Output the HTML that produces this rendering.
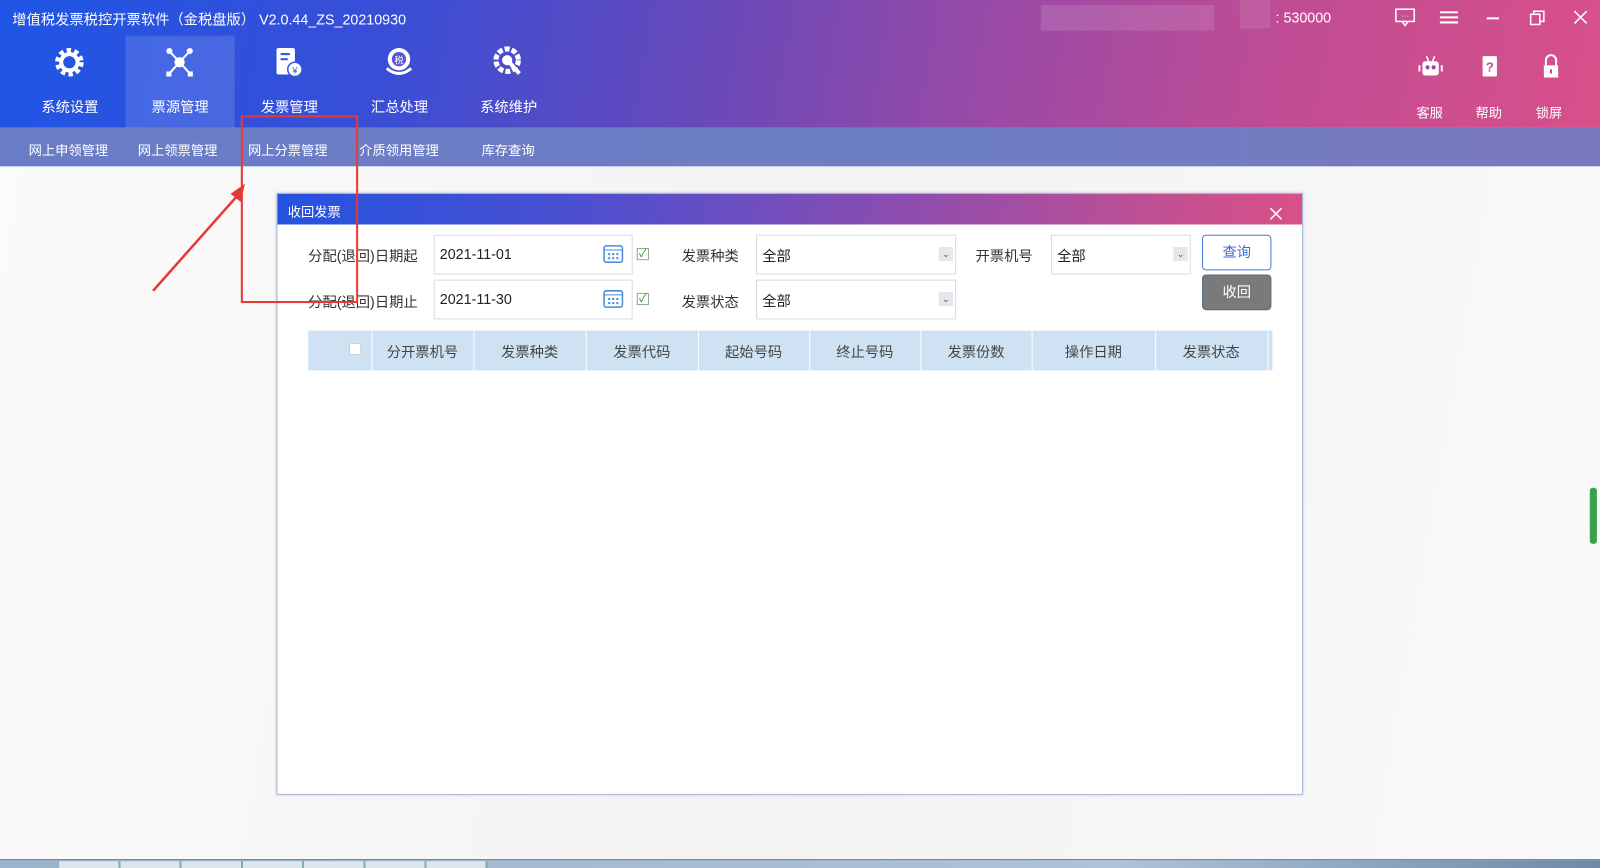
<!DOCTYPE html>
<html><head><meta charset="utf-8"><style>
*{margin:0;padding:0;box-sizing:border-box}
html,body{width:1600px;height:868px;overflow:hidden;background:#f8f8f8}
#w{position:absolute;left:0;top:0;width:1568px;height:851px;transform:scale(1.0204);transform-origin:0 0;font-family:"Liberation Sans","Noto Sans CJK SC",sans-serif;background:linear-gradient(100deg,#fbfbfb,#f3f3f3 50%,#f9f9f9)}
.a{position:absolute}
#hd{left:0;top:0;width:1568px;height:125px;background:linear-gradient(100deg,#1f55e6 0%,#3a4ed6 25%,#6a49b8 45%,#9a4aa6 62%,#c04c94 80%,#d8508a 100%)}
.t{color:#fff;font-size:14px;white-space:nowrap}
.nav{position:absolute;top:35px;width:107px;height:90px;text-align:center;color:#fff;font-size:14px}
.nav .lb{position:absolute;top:60px;left:0;width:100%}
.nav svg{position:absolute;left:38px;top:10px}
#sub{left:0;top:125px;width:1568px;height:38px;background:linear-gradient(90deg,#6a7cc6,#6e7ec4 60%,#7a78be)}
.si{position:absolute;top:12px;color:#fff;font-size:13px}
#dlg{left:271px;top:189px;width:1006px;height:590px;background:#fff;border:1px solid #a9b8d8;box-shadow:0 0 3px #bbb}
#dt{left:0;top:0;width:1004px;height:30px;background:linear-gradient(100deg,#2353e0,#4d4fd0 30%,#8a4db0 60%,#c9508f 90%,#d85088)}
.lab{position:absolute;font-size:14px;color:#333}
.inp{position:absolute;height:39px;border:1px solid #d6dbe3;background:#fff;font-size:14px;color:#222;padding:10px 0 0 5px}
.dd{position:absolute;right:2px;top:11px;width:14px;height:14px;background:#e4e7ec;color:#555;font-size:9px;text-align:center;line-height:14px}
.cb{position:absolute;width:12px;height:12px;border:1px solid #8a9;background:#fff;color:#2a8a2a;font-size:11px;line-height:10px;text-align:center}
#th{left:30px;top:134px;width:945px;height:39px;background:#cfe2f3}
.th{position:absolute;top:11px;font-size:14px;color:#444;text-align:center}
.sep{position:absolute;top:0;width:1px;height:39px;background:#fff}
</style></head><body><div id="w">
<div id="hd" class="a">
 <div class="a" style="left:1020px;top:5px;width:170px;height:25px;background:rgba(255,255,255,.12)"></div>
 <div class="a" style="left:1215px;top:0;width:30px;height:28px;background:rgba(255,255,255,.1)"></div>
 <div class="a t" style="left:12px;top:9px">增值税发票税控开票软件（金税盘版） V2.0.44_ZS_20210930</div>
 <div class="a t" style="left:1250px;top:9px">: 530000</div>
 <div class="a" style="left:123px;top:35px;width:107px;height:90px;background:rgba(255,255,255,.13)"></div>
 <div class="nav" style="left:15px"><svg width="30" height="32" viewBox="0 0 30 32"><circle cx="15" cy="16" r="11" fill="none" stroke="#fff" stroke-width="6" stroke-dasharray="4 3"/><circle cx="15" cy="16" r="8" fill="none" stroke="#fff" stroke-width="4"/></svg><div class="lb">系统设置</div></div>
 <div class="nav" style="left:123px"><svg width="30" height="32" viewBox="0 0 30 32"><g stroke="#fff" stroke-width="2"><line x1="15" y1="16" x2="5" y2="5"/><line x1="15" y1="16" x2="25" y2="5"/><line x1="15" y1="16" x2="5" y2="27"/><line x1="15" y1="16" x2="25" y2="27"/></g><circle cx="15" cy="16" r="5" fill="#fff"/><circle cx="5" cy="5" r="3" fill="#fff"/><circle cx="25" cy="5" r="3" fill="#fff"/><rect x="2" y="25" width="5" height="5" fill="#fff"/><rect x="23" y="25" width="5" height="5" fill="#fff"/></svg><div class="lb">票源管理</div></div>
 <div class="nav" style="left:230px"><svg width="30" height="32" viewBox="0 0 30 32"><rect x="3" y="2" width="18" height="26" rx="2" fill="#fff"/><g stroke="#3a5ad8" stroke-width="2"><line x1="7" y1="8" x2="16" y2="8"/><line x1="7" y1="13" x2="14" y2="13"/></g><circle cx="21" cy="23" r="7" fill="#fff" stroke="#3a5ad8" stroke-width="1.5"/><text x="21" y="27" font-size="9" text-anchor="middle" fill="#3a5ad8">¥</text></svg><div class="lb">发票管理</div></div>
 <div class="nav" style="left:338px"><svg width="30" height="32" viewBox="0 0 30 32"><circle cx="15" cy="13" r="11" fill="#fff"/><circle cx="15" cy="13" r="7" fill="#5a55d0"/><text x="15" y="17" font-size="9" text-anchor="middle" fill="#fff">税</text><path d="M3 22 Q15 32 27 22" stroke="#fff" stroke-width="3" fill="none"/></svg><div class="lb">汇总处理</div></div>
 <div class="nav" style="left:445px"><svg width="30" height="32" viewBox="0 0 30 32"><circle cx="14" cy="14" r="11" fill="none" stroke="#fff" stroke-width="5" stroke-dasharray="5 2"/><circle cx="14" cy="14" r="5" fill="#fff"/><line x1="17" y1="17" x2="26" y2="27" stroke="#fff" stroke-width="4"/></svg><div class="lb">系统维护</div></div>
 <svg class="a" style="left:1367px;top:8px" width="20" height="18"><rect x="1" y="1" width="18" height="12" fill="none" stroke="#fff" stroke-width="1.5"/><path d="M7 13 L10 17 L13 13" fill="none" stroke="#fff" stroke-width="1.5"/><text x="10" y="10" font-size="8" fill="#fff" text-anchor="middle">···</text></svg>
 <svg class="a" style="left:1411px;top:11px" width="18" height="12"><g stroke="#fff" stroke-width="2"><line x1="0" y1="1" x2="18" y2="1"/><line x1="0" y1="6" x2="18" y2="6"/><line x1="0" y1="11" x2="18" y2="11"/></g></svg>
 <div class="a" style="left:1457px;top:17px;width:12px;height:2px;background:#fff"></div>
 <svg class="a" style="left:1499px;top:10px" width="15" height="15"><rect x="1" y="4" width="9" height="10" fill="none" stroke="#fff" stroke-width="1.5"/><path d="M4 4 V1 H14 V11 H10" fill="none" stroke="#fff" stroke-width="1.5"/></svg>
 <svg class="a" style="left:1542px;top:10px" width="14" height="14"><path d="M1 1L13 13M13 1L1 13" stroke="#fff" stroke-width="1.5"/></svg>
 <svg class="a" style="left:1390px;top:53px" width="24" height="24"><line x1="8" y1="2" x2="10" y2="7" stroke="#fff" stroke-width="1.5"/><line x1="16" y1="2" x2="14" y2="7" stroke="#fff" stroke-width="1.5"/><rect x="4" y="7" width="16" height="14" rx="3" fill="#fff"/><rect x="0" y="11" width="2" height="6" fill="#fff"/><rect x="22" y="11" width="2" height="6" fill="#fff"/><circle cx="9" cy="13" r="2" fill="#9a4aa6"/><circle cx="15" cy="13" r="2" fill="#9a4aa6"/></svg>
 <svg class="a" style="left:1451px;top:53px" width="18" height="24"><rect x="2" y="2" width="14" height="20" rx="1" fill="#fff"/><text x="9" y="17" font-size="13" fill="#c04c94" text-anchor="middle" font-weight="bold">?</text></svg>
 <svg class="a" style="left:1511px;top:52px" width="18" height="26"><path d="M4 12 V7 a5 5 0 0 1 10 0 V12" fill="none" stroke="#fff" stroke-width="2"/><rect x="2" y="12" width="14" height="12" fill="#fff"/><rect x="8" y="16" width="2" height="4" fill="#c04c94"/></svg>
 <div class="a t" style="left:1388px;top:100px;font-size:13px">客服</div>
 <div class="a t" style="left:1446px;top:100px;font-size:13px">帮助</div>
 <div class="a t" style="left:1505px;top:100px;font-size:13px">锁屏</div>
</div>
<div id="sub" class="a">
 <div class="si" style="left:28px">网上申领管理</div>
 <div class="si" style="left:135px">网上领票管理</div>
 <div class="si" style="left:243px">网上分票管理</div>
 <div class="si" style="left:352px">介质领用管理</div>
 <div class="si" style="left:472px">库存查询</div>
</div>
<div class="a" style="left:1558px;top:478px;width:7px;height:55px;background:#3aa04a;border-radius:3px"></div>
<div id="dlg" class="a">
 <div id="dt" class="a"><div class="a t" style="left:10px;top:7px;font-size:13px">收回发票</div>
 <svg class="a" style="left:972px;top:13px" width="13" height="13"><path d="M1 1L12 12M12 1L1 12" stroke="#fff" stroke-width="1.5"/></svg></div>
 <div class="lab" style="left:30px;top:51px">分配(退回)日期起</div>
 <div class="inp" style="left:153px;top:40px;width:195px">2021-11-01</div>
 <div class="lab" style="left:30px;top:96px">分配(退回)日期止</div>
 <div class="inp" style="left:153px;top:84px;width:195px">2021-11-30</div>
 <svg class="a" style="left:319px;top:48px" width="20" height="20"><rect x="1" y="3" width="18" height="16" rx="2" fill="none" stroke="#4a8ad8" stroke-width="1.5"/><line x1="1" y1="7" x2="19" y2="7" stroke="#4a8ad8"/><g fill="#4a8ad8"><rect x="5" y="10" width="2" height="2"/><rect x="9" y="10" width="2" height="2"/><rect x="13" y="10" width="2" height="2"/><rect x="5" y="14" width="2" height="2"/><rect x="9" y="14" width="2" height="2"/><rect x="13" y="14" width="2" height="2"/></g></svg>
 <svg class="a" style="left:319px;top:92px" width="20" height="20"><rect x="1" y="3" width="18" height="16" rx="2" fill="none" stroke="#4a8ad8" stroke-width="1.5"/><line x1="1" y1="7" x2="19" y2="7" stroke="#4a8ad8"/><g fill="#4a8ad8"><rect x="5" y="10" width="2" height="2"/><rect x="9" y="10" width="2" height="2"/><rect x="13" y="10" width="2" height="2"/><rect x="5" y="14" width="2" height="2"/><rect x="9" y="14" width="2" height="2"/><rect x="13" y="14" width="2" height="2"/></g></svg>
 <div class="cb" style="left:352px;top:53px">✓</div>
 <div class="cb" style="left:352px;top:97px">✓</div>
 <div class="lab" style="left:396px;top:51px">发票种类</div>
 <div class="inp" style="left:469px;top:40px;width:196px">全部<div class="dd">⌄</div></div>
 <div class="lab" style="left:396px;top:96px">发票状态</div>
 <div class="inp" style="left:469px;top:84px;width:196px">全部<div class="dd">⌄</div></div>
 <div class="lab" style="left:684px;top:51px">开票机号</div>
 <div class="inp" style="left:758px;top:40px;width:137px">全部<div class="dd">⌄</div></div>
 <div class="a" style="left:906px;top:40px;width:68px;height:35px;border:1px solid #4a7ad8;border-radius:4px;color:#3a6ad8;font-size:14px;text-align:center;line-height:33px">查询</div>
 <div class="a" style="left:906px;top:79px;width:68px;height:35px;border:1px solid #5a6a80;border-radius:4px;background:#7a7a7a;color:#fff;font-size:14px;text-align:center;line-height:33px">收回</div>
 <div id="th" class="a">
  <div class="a" style="left:40px;top:12px;width:12px;height:12px;background:#fff;border:1px solid #ccd"></div>
  <div class="sep" style="left:62px"></div><div class="sep" style="left:162px"></div><div class="sep" style="left:272px"></div><div class="sep" style="left:382px"></div><div class="sep" style="left:491px"></div><div class="sep" style="left:600px"></div><div class="sep" style="left:709px"></div><div class="sep" style="left:830px"></div><div class="sep" style="left:940px"></div>
  <div class="th" style="left:62px;width:100px">分开票机号</div>
  <div class="th" style="left:162px;width:110px">发票种类</div>
  <div class="th" style="left:272px;width:110px">发票代码</div>
  <div class="th" style="left:382px;width:109px">起始号码</div>
  <div class="th" style="left:491px;width:109px">终止号码</div>
  <div class="th" style="left:600px;width:109px">发票份数</div>
  <div class="th" style="left:709px;width:121px">操作日期</div>
  <div class="th" style="left:830px;width:110px">发票状态</div>
 </div>
</div>
<div class="a" style="left:236px;top:113px;width:115px;height:184px;border:2px solid #e53935"></div>
<svg class="a" style="left:140px;top:170px" width="110" height="125"><line x1="10" y1="115" x2="96" y2="18" stroke="#e53935" stroke-width="2.5"/><path d="M100 10 L86 20 L96 28 Z" fill="#e53935"/></svg>
<div class="a" style="left:0;top:842px;width:1568px;height:9px;background:linear-gradient(90deg,#9bb3cc,#aec3d8 70%,#6e8aa8);border-top:1px solid #5a7090"></div>
<div class="a" style="left:58px;top:844px;width:420px;height:7px;background:repeating-linear-gradient(90deg,#dde6ef 0 58px,#8aa 58px 60px)"></div>
</div></body></html>
